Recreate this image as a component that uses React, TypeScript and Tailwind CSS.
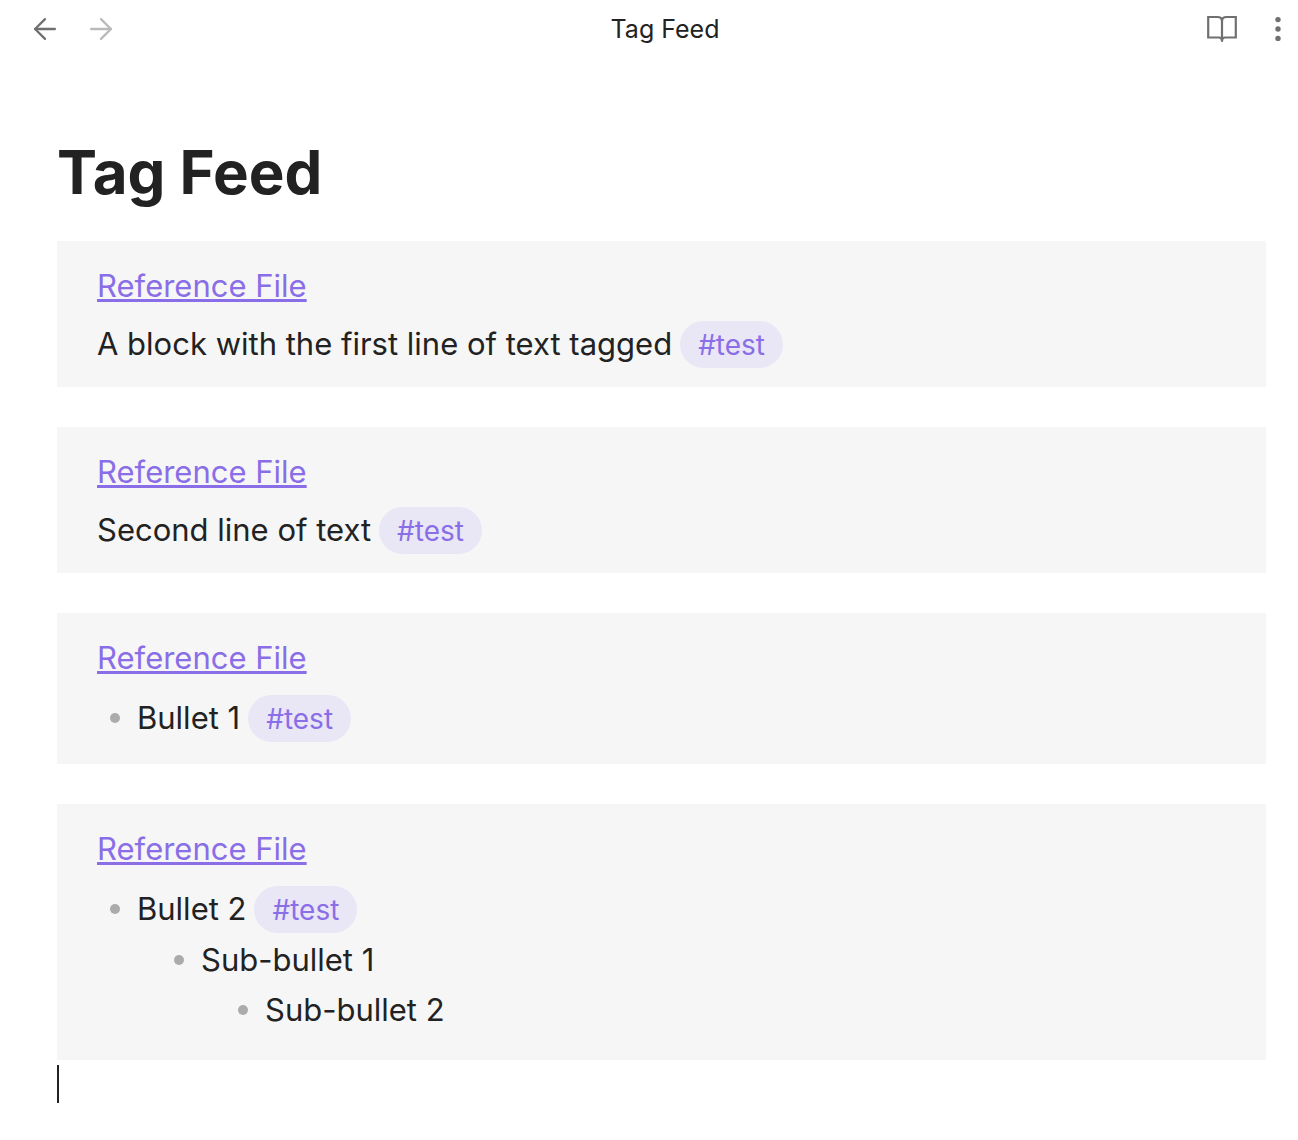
import React from "react";
import { ArrowLeft, ArrowRight } from "lucide-react";

function BookIcon() {
  return (
    <svg width="32" height="32" viewBox="0 0 32 32" fill="none" stroke="currentColor" strokeWidth="2.2" aria-hidden="true">
      <path d="M2.200 4h9.300c2.700 0 4.500 1.600 4.500 4 0-2.400 1.800-4 4.500-4h9.300v20.500H19c-1.900 0-3 1.200-3 3 0-1.800-1.100-3-3-3H2.200z" />
      <path d="M16 8v20" strokeLinecap="round" />
    </svg>
  );
}

function DotsIcon() {
  return (
    <svg width="32" height="32" viewBox="0 0 32 32" fill="currentColor" aria-hidden="true">
      <circle cx="16" cy="6.600" r="2.700" />
      <circle cx="16" cy="16" r="2.700" />
      <circle cx="16" cy="25.400" r="2.700" />
    </svg>
  );
}

function Tag() {
  return (
    <a href="#test" className="ml-2 inline-flex h-[47px] items-center rounded-full bg-[#e9e6f5] px-[18px] pt-[2px] text-[28px] text-[#8a6ee8]">
      #test
    </a>
  );
}

function Card({ children }: { children: React.ReactNode }) {
  return (
    <section className="bg-[#f6f6f6] px-10 pt-5">
      <a href="#reference-file" className="inline-block align-top text-[31px] leading-[50px] text-[#8a6ee8] underline decoration-[3px] underline-offset-2">
        Reference File
      </a>
      {children}
    </section>
  );
}

function Item({ text, tag }: { text: string; tag?: boolean }) {
  return (
    <div className="flex items-center">
      <span className="ml-[13px] mr-[17px] size-[10px] rounded-full bg-[#ababab]" />
      <span>{text}</span>
      {tag && <Tag />}
    </div>
  );
}

export default function App() {
  return (
    <div className="min-h-screen bg-white font-['Inter',sans-serif] text-[#222222]">
      <header className="grid h-[58px] grid-cols-3 items-center pl-7 pr-1">
        <div className="flex items-center gap-[22px]">
          <button aria-label="Back" className="text-[#707070]"><ArrowLeft size={34} strokeWidth={1.6} /></button>
          <button aria-label="Forward" className="text-[#bababa]"><ArrowRight size={34} strokeWidth={1.6} /></button>
        </div>
        <span className="pl-2 pt-[2px] text-center text-[25px]">Tag Feed</span>
        <div className="flex items-center justify-end gap-6">
          <button aria-label="Reading view" className="text-[#707070]"><BookIcon /></button>
          <button aria-label="More options" className="text-[#707070]"><DotsIcon /></button>
        </div>
      </header>
      <main className="pl-[57px] pr-8 pt-[76px] text-[31px] leading-[50px]">
        <h1 className="text-[60px] font-bold leading-[77px]">Tag Feed</h1>
        <div className="mt-[30px] flex flex-col gap-10">
          <Card><p className="flex items-center pb-[18px] pt-2">A block with the first line of text tagged<Tag /></p></Card>
          <Card><p className="flex items-center pb-[18px] pt-2">Second line of text<Tag /></p></Card>
          <Card><ul className="pb-[21px] pt-[10px]"><li><Item text="Bullet 1" tag /></li></ul></Card>
          <Card>
            <ul className="pb-[25px] pt-[10px]">
              <li><Item text="Bullet 2" tag />
                <ul className="pl-16 pt-px"><li><Item text="Sub-bullet 1" />
                  <ul className="pl-16"><li><Item text="Sub-bullet 2" /></li></ul>
                </li></ul>
              </li>
            </ul>
          </Card>
        </div>
        <div className="mt-[5px] h-[38px] w-[2px] bg-[#222222]" />
      </main>
    </div>
  );
}
